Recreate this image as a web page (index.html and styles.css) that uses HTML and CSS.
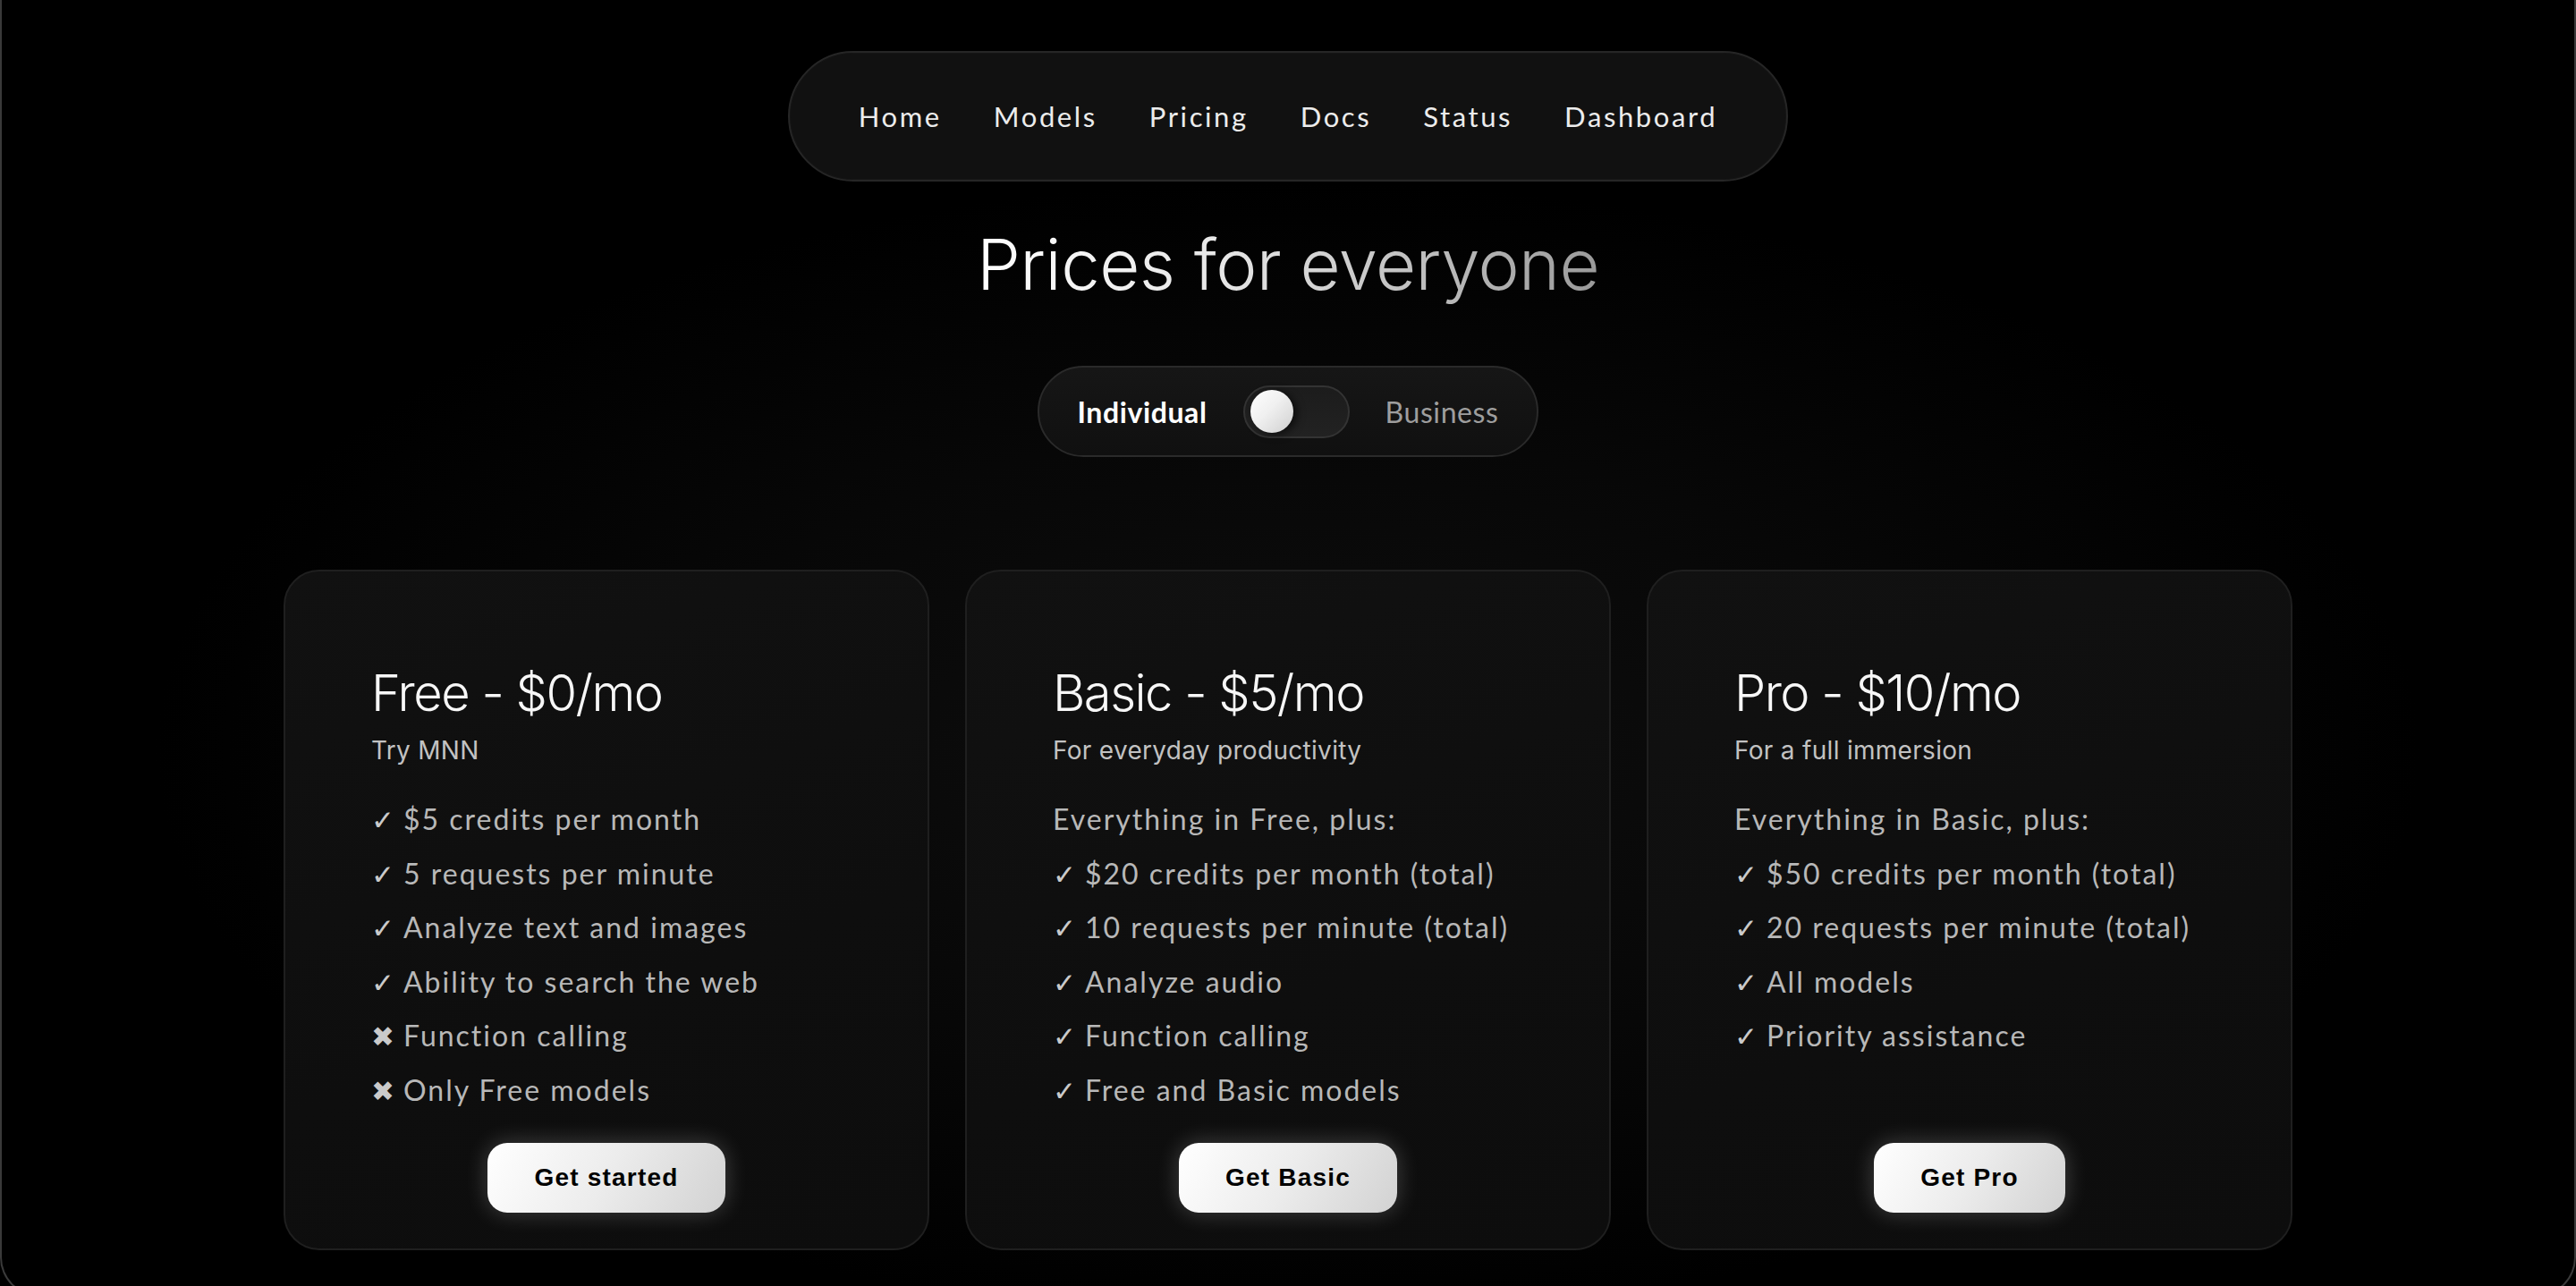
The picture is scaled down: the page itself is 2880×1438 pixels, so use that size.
FILE: index.html
```html
<!DOCTYPE html>
<html lang="en">
<head>
<meta charset="utf-8">
<title>Pricing</title>
<link rel="stylesheet" href="styles.css">
</head>
<body>
<div class="frame">
  <nav class="nav">
    <a href="#">Home</a>
    <a href="#">Models</a>
    <a href="#">Pricing</a>
    <a href="#">Docs</a>
    <a href="#">Status</a>
    <a href="#">Dashboard</a>
  </nav>

  <h1 class="title">Prices for everyone</h1>

  <div class="toggle">
    <span class="opt active">Individual</span>
    <span class="switch"><span class="knob"></span></span>
    <span class="opt">Business</span>
  </div>

  <section class="plans">
    <article class="card">
      <h2 class="plan-name">Free - $0/mo</h2>
      <p class="plan-sub">Try MNN</p>
      <ul class="features">
        <li><span class="mark">✓</span>$5 credits per month</li>
        <li><span class="mark">✓</span>5 requests per minute</li>
        <li><span class="mark">✓</span>Analyze text and images</li>
        <li><span class="mark">✓</span>Ability to search the web</li>
        <li><span class="mark">✖</span>Function calling</li>
        <li><span class="mark">✖</span>Only Free models</li>
      </ul>
      <button class="cta">Get started</button>
    </article>

    <article class="card">
      <h2 class="plan-name">Basic - $5/mo</h2>
      <p class="plan-sub">For everyday productivity</p>
      <ul class="features">
        <li>Everything in Free, plus:</li>
        <li><span class="mark">✓</span>$20 credits per month (total)</li>
        <li><span class="mark">✓</span>10 requests per minute (total)</li>
        <li><span class="mark">✓</span>Analyze audio</li>
        <li><span class="mark">✓</span>Function calling</li>
        <li><span class="mark">✓</span>Free and Basic models</li>
      </ul>
      <button class="cta">Get Basic</button>
    </article>

    <article class="card">
      <h2 class="plan-name">Pro - $10/mo</h2>
      <p class="plan-sub">For a full immersion</p>
      <ul class="features">
        <li>Everything in Basic, plus:</li>
        <li><span class="mark">✓</span>$50 credits per month (total)</li>
        <li><span class="mark">✓</span>20 requests per minute (total)</li>
        <li><span class="mark">✓</span>All models</li>
        <li><span class="mark">✓</span>Priority assistance</li>
      </ul>
      <button class="cta">Get Pro</button>
    </article>
  </section>
</div>
</body>
</html>
```

FILE: styles.css
```css
html, body {
  margin: 0;
  padding: 0;
  background: #000;
  overflow: hidden;
}

.frame {
  box-sizing: border-box;
  width: 100%;
  height: 1450px;
  border: 2px solid #3a3a3a;
  border-top: none;
  border-radius: 0 0 44px 44px;
  background: radial-gradient(ellipse 55% 55% at 50% 58%, #0e0e0e 0%, #070707 45%, #000 80%);
  display: flex;
  flex-direction: column;
  align-items: center;
  padding-top: 57px;
}

/* NAV */
.nav {
  box-sizing: border-box;
  height: 146px;
  display: flex;
  align-items: center;
  gap: 58px;
  padding: 0 77px;
  border: 2px solid #262626;
  border-radius: 999px;
  background: #111;
  box-shadow: inset 0 0 0 1px #151515;
}

.nav a {
  font-family: "Lato", "Open Sans", sans-serif;
  font-weight: 400;
  font-size: 31px;
  letter-spacing: 2.6px;
  color: #ececec;
  text-decoration: none;
}

/* TITLE */
.title {
  margin: 46px 0 0;
  font-family: "Inter", "Liberation Sans", sans-serif;
  font-weight: 300;
  font-size: 78px;
  line-height: 94px;
  letter-spacing: -0.6px;
  background: linear-gradient(90deg, #ffffff 0%, #e6e6e6 40%, #9a9a9a 100%);
  -webkit-background-clip: text;
  background-clip: text;
  color: transparent;
}

/* TOGGLE */
.toggle {
  box-sizing: border-box;
  margin-top: 66px;
  height: 102px;
  display: flex;
  align-items: center;
  gap: 40px;
  padding: 0 42px 0 42px;
  border: 2px solid #2a2a2a;
  border-radius: 999px;
  background: linear-gradient(180deg, #161616, #101010);
}

.opt {
  font-family: "Lato", "Open Sans", sans-serif;
  font-size: 32px;
  font-weight: 400;
  letter-spacing: 0.6px;
  color: #9e9e9e;
}

.opt.active {
  font-weight: 700;
  color: #fff;
}

.switch {
  box-sizing: border-box;
  width: 119px;
  height: 59px;
  display: flex;
  align-items: center;
  padding: 0 6px;
  border: 2px solid #333;
  border-radius: 999px;
  background: linear-gradient(180deg, #1c1c1c, #222);
}

.knob {
  width: 48px;
  height: 48px;
  border-radius: 50%;
  background: linear-gradient(135deg, #ffffff 0%, #f0f0f0 45%, #cfcfcf 100%);
  box-shadow: 4px 2px 10px rgba(0, 0, 0, 0.6);
}

/* PLANS */
.plans {
  margin-top: 126px;
  display: grid;
  grid-template-columns: repeat(3, 722px);
  gap: 40px;
}

.card {
  box-sizing: border-box;
  height: 761px;
  display: flex;
  flex-direction: column;
  padding: 103px 96px 40px;
  border: 2px solid #1f1f1f;
  border-radius: 40px;
  background: linear-gradient(160deg, #111 0%, #0e0e0e 60%, #0d0d0d 100%);
}

.plan-name {
  margin: 0;
  font-family: "Inter", "Liberation Sans", sans-serif;
  font-weight: 300;
  font-size: 56px;
  line-height: 67px;
  letter-spacing: -1.5px;
  color: #f7f7f7;
}

.plan-sub {
  margin: 13px 0 0;
  font-family: "Inter", "Liberation Sans", sans-serif;
  font-weight: 400;
  font-size: 28px;
  line-height: 34px;
  letter-spacing: 0.3px;
  color: #c2c2c2;
}

.features {
  list-style: none;
  margin: 30px 0 0;
  padding: 0;
  font-family: "Lato", "Open Sans", sans-serif;
  font-size: 32px;
  line-height: 60.5px;
  letter-spacing: 2px;
  color: #b8b8b8;
}

.features li {
  height: 60.5px;
}

.mark {
  display: inline-block;
  width: 36px;
  font-family: "DejaVu Sans", sans-serif;
  font-size: 31px;
  font-weight: 700;
  line-height: 1;
  letter-spacing: 0;
  color: #cacaca;
}

.cta {
  margin-top: auto;
  align-self: center;
  height: 78px;
  padding: 0 52px;
  border: none;
  border-radius: 22px;
  background: linear-gradient(120deg, #ffffff 0%, #ececec 50%, #d2d2d2 100%);
  box-shadow: 0 0 26px rgba(255, 255, 255, 0.22);
  font-family: "Liberation Sans", Arial, sans-serif;
  font-weight: 700;
  font-size: 28px;
  letter-spacing: 1.2px;
  color: #000;
  cursor: pointer;
}
```
